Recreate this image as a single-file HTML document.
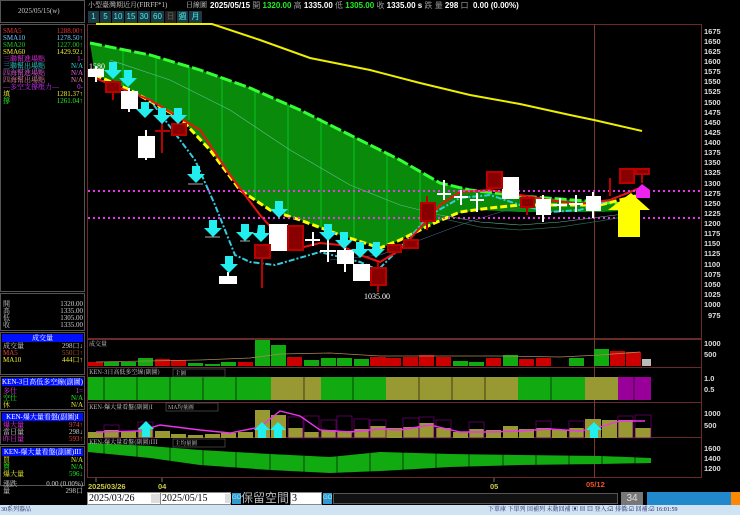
<!DOCTYPE html>
<html><head><meta charset="utf-8"><style>
*{margin:0;padding:0;box-sizing:border-box}
body{width:740px;height:515px;background:#000;overflow:hidden;position:relative;font-family:"Liberation Sans","Noto Sans CJK TC",sans-serif}
.a{position:absolute;white-space:nowrap}
.s{font-family:"Liberation Serif","Noto Serif CJK SC",serif;font-size:7px;line-height:7px}
.lp{position:absolute;left:0;width:85px;border:1px solid #555}
.row{position:absolute;left:3px;width:80px;height:7px;white-space:nowrap;font-family:"Liberation Serif","Noto Serif CJK SC",serif;font-size:7px;line-height:7px}
.row span{position:absolute;right:0;top:0}
.bh{position:absolute;left:2px;width:81px;background:#0010ff;color:#fff;font-size:7px;line-height:8px;height:8px;overflow:hidden;white-space:nowrap;text-align:center;font-family:"Liberation Serif","Noto Serif CJK SC",serif}
.tb{position:absolute;top:11px;height:12px;background:#1c3a44;color:#4ee;font-size:8px;line-height:12px;text-align:center;border-right:1px solid #000}
</style></head><body>
<!-- left panel -->
<div class="lp" style="top:0;height:23px"></div>
<div class="a s" style="left:18px;top:8px;color:#ccc">2025/05/15(w)</div>
<div class="lp" style="top:24px;height:268px"></div>
<div class="row" style="top:28px;color:#e33">SMA5<span>1288.00↑</span></div>
<div class="row" style="top:35px;color:#6cf">SMA10<span>1278.50↑</span></div>
<div class="row" style="top:42px;color:#2c2">SMA20<span>1227.00↑</span></div>
<div class="row" style="top:49px;color:#ee3">SMA60<span>1429.92↓</span></div>
<div class="row" style="top:56px;color:#e3e">三聯幫進場點<span>1-</span></div>
<div class="row" style="top:63px;color:#3dd">三聯幫出場點<span>N/A</span></div>
<div class="row" style="top:70px;color:#e6e">四海幫進場點<span>N/A</span></div>
<div class="row" style="top:77px;color:#e8a">四海幫出場點<span>N/A</span></div>
<div class="row" style="top:84px;color:#c3f">—多空支撐壓力—<span>0-</span></div>
<div class="row" style="top:91px;color:#ee3">填<span>1281.37↑</span></div>
<div class="row" style="top:98px;color:#2e2">撐<span>1261.04↑</span></div>
<div class="lp" style="top:293px;height:38px"></div>
<div class="row" style="top:301px;color:#ccc">開<span>1320.00</span></div>
<div class="row" style="top:308px;color:#ccc">高<span>1335.00</span></div>
<div class="row" style="top:315px;color:#ccc">低<span>1305.00</span></div>
<div class="row" style="top:322px;color:#ccc">收<span>1335.00</span></div>
<div class="lp" style="top:332px;height:43px"></div>
<div class="bh" style="top:334px">成交量</div>
<div class="row" style="top:343px;color:#ccc">成交量<span>298口↓</span></div>
<div class="row" style="top:350px;color:#e44">MA5<span style="color:#a52">550口↑</span></div>
<div class="row" style="top:357px;color:#ee3">MA10<span>444口↑</span></div>
<div class="lp" style="top:376px;height:34px"></div>
<div class="bh" style="top:378px">KEN-3日高低多空線(副圖)</div>
<div class="row" style="top:388px;color:#e3e">多仕<span>1=</span></div>
<div class="row" style="top:395px;color:#2e2">空仕<span>N/A</span></div>
<div class="row" style="top:402px;color:#ee3">休<span>N/A</span></div>
<div class="lp" style="top:411px;height:34px"></div>
<div class="bh" style="top:413px">KEN-爆大量看盤(副圖)I</div>
<div class="row" style="top:422px;color:#e3e">爆大量<span style="color:#e44">974↑</span></div>
<div class="row" style="top:429px;color:#ccc">當日量<span>298↓</span></div>
<div class="row" style="top:436px;color:#e3e">昨日量<span style="color:#e44">593↑</span></div>
<div class="lp" style="top:446px;height:40px"></div>
<div class="bh" style="top:448px">KEN-爆大量看盤(副圖)III</div>
<div class="row" style="top:457px;color:#ee3">買<span>N/A</span></div>
<div class="row" style="top:464px;color:#2e2">賣<span>N/A</span></div>
<div class="row" style="top:471px;color:#ee3">爆大量<span style="color:#2e2">596↓</span></div>
<div class="row" style="top:481px;color:#ccc">漲跌<span>0.00 (0.00%)</span></div>
<div class="row" style="top:488px;color:#ccc">量<span>298口</span></div>

<!-- header -->
<div class="a s" style="left:88px;top:2px;color:#ccc">小型臺灣期近月(FIRFF*1)</div>
<div class="a s" style="left:186px;top:2px;color:#ccc">日線圖</div>
<div class="a" style="left:210px;top:1px;font-size:8px;font-weight:bold;color:#fff;line-height:9px">2025/05/15 <span style="color:#999;font-weight:normal">開</span> <span style="color:#2e2">1320.00</span> <span style="color:#999;font-weight:normal">高</span> 1335.00 <span style="color:#999;font-weight:normal">低</span> <span style="color:#2e2">1305.00</span> <span style="color:#999;font-weight:normal">收</span> 1335.00 s <span style="color:#999;font-weight:normal">跌 量</span> 298 <span style="color:#999;font-weight:normal">口</span>&nbsp; 0.00 (0.00%)</div>
<div class="tb" style="left:88px;width:12px">1</div>
<div class="tb" style="left:100px;width:12px">5</div>
<div class="tb" style="left:112px;width:13px">10</div>
<div class="tb" style="left:125px;width:13px">15</div>
<div class="tb" style="left:138px;width:13px">30</div>
<div class="tb" style="left:151px;width:14px">60</div>
<div class="tb" style="left:165px;width:12px;background:#222;color:#666">日</div>
<div class="tb" style="left:177px;width:12px">週</div>
<div class="tb" style="left:189px;width:14px">月</div>

<svg class="a" style="left:0;top:0" width="740" height="515" viewBox="0 0 740 515">
<g stroke="#6a2a2a" fill="none" stroke-width="1">
<rect x="87.5" y="24.5" width="614" height="314"/>
<rect x="87.5" y="339.5" width="614" height="28"/>
<rect x="87.5" y="367.5" width="614" height="35"/>
<rect x="87.5" y="402.5" width="614" height="35"/>
<rect x="87.5" y="437.5" width="614" height="40"/>
</g>
<line x1="594.5" y1="24" x2="594.5" y2="478" stroke="#7a3a2a"/>
<!-- cloud -->
<polygon fill="#0a8a0a" points="90,43 150,55 200,70 250,88 300,110 350,135 400,160 440,183 470,190 520,196 560,199 600,202 640,205 640,210 600,212 560,212 520,212 480,210 460,213 430,225 400,240 380,248 340,235 300,220 270,210 240,190 210,150 180,118 130,90 95,75"/>
<g stroke="#0f4" stroke-width="1" opacity=".5"><line x1="123" y1="48" x2="123" y2="86"/><line x1="156" y1="56" x2="156" y2="104"/><line x1="189" y1="66" x2="189" y2="120"/><line x1="222" y1="77" x2="222" y2="165"/><line x1="255" y1="90" x2="255" y2="200"/><line x1="288" y1="104" x2="288" y2="217"/><line x1="321" y1="118" x2="321" y2="227"/><line x1="354" y1="136" x2="354" y2="238"/><line x1="387" y1="152" x2="387" y2="246"/><line x1="420" y1="170" x2="420" y2="232"/></g>
<polyline fill="none" stroke="#3f3" stroke-width="3" stroke-dasharray="12,3" points="90,43 150,55 200,70 250,88 300,110 350,135 400,160 440,183 470,190 520,196 560,199 600,202 640,205"/>
<polyline fill="none" stroke="#6b9" stroke-width=".6" points="110,60 170,80 230,110 290,150 350,185 400,205 440,215 480,222 520,225 560,222 600,217 640,212"/>
<polyline fill="none" stroke="#468" stroke-width=".6" points="330,260 380,255 420,240 460,225 500,212 540,204"/>
<polyline fill="none" stroke="#264" stroke-width=".8" points="440,218 480,227 520,230 560,227 600,221 640,214"/>
<!-- SMA60 -->
<polyline fill="none" stroke="#ee0" stroke-width="2" points="96,24 212,24 260,40 310,58 370,70 420,83 470,95 520,104 570,115 594,120 642,131"/>
<!-- yellow dashed -->
<polyline fill="none" stroke="#ff0" stroke-width="3" stroke-dasharray="7,3" points="95,75 130,90 180,118 210,150 240,190 270,210 300,220 340,235 380,248 400,240 430,225 460,212 490,208 520,205 560,205 600,205 640,195"/>
<!-- cyan dashdot -->
<polyline fill="none" stroke="#3cd" stroke-width="2" stroke-dasharray="6,2,2,2" points="100,80 150,100 195,160 215,205 235,255 250,262 275,265 320,252 360,262 378,270 400,248 430,215 460,198 490,195 520,205 550,212 580,210 610,200 640,188"/>
<!-- red SMA5 -->
<polyline fill="none" stroke="#e11" stroke-width="2" points="95,78 150,100 200,130 230,175 260,215 285,243 300,248 320,243 340,245 360,255 380,262 400,250 420,228 440,205 460,192 490,190 520,195 550,200 580,204 610,200 640,188"/>
<g stroke="#e3e" stroke-width="2" stroke-dasharray="2,3"><line x1="88" y1="191" x2="702" y2="191"/><line x1="88" y1="218" x2="702" y2="218"/></g>
<!-- candles -->
<g stroke-width="2">
<g stroke="#fff" fill="#fff"><line x1="96" y1="66" x2="96" y2="82"/><rect x="89" y="70" width="14" height="6"/>
<line x1="129" y1="88" x2="129" y2="112"/><rect x="122" y="92" width="15" height="16"/>
<line x1="146" y1="130" x2="146" y2="160"/><rect x="139" y="137" width="15" height="20"/>
<rect x="220" y="277" width="16" height="6"/><line x1="228" y1="272" x2="228" y2="277"/>
<rect x="270" y="225" width="17" height="25"/>
<line x1="328" y1="240" x2="328" y2="262"/><line x1="320" y1="251" x2="336" y2="251"/>
<line x1="345" y1="248" x2="345" y2="272"/><rect x="338" y="251" width="15" height="12"/>
<rect x="354" y="265" width="15" height="15"/>
<line x1="444" y1="180" x2="444" y2="200"/><line x1="437" y1="194" x2="451" y2="194"/>
<line x1="461" y1="190" x2="461" y2="205"/><line x1="454" y1="197" x2="468" y2="197"/>
<line x1="477" y1="193" x2="477" y2="212"/><line x1="470" y1="200" x2="484" y2="200"/>
<rect x="503" y="178" width="15" height="20"/>
<line x1="543" y1="195" x2="543" y2="222"/><rect x="537" y="200" width="13" height="14"/>
<line x1="560" y1="198" x2="560" y2="212"/><line x1="553" y1="205" x2="567" y2="205"/>
<line x1="576" y1="195" x2="576" y2="212"/><line x1="569" y1="204" x2="583" y2="204"/>
<line x1="593" y1="192" x2="593" y2="218"/><rect x="587" y="197" width="13" height="13"/>
<line x1="313" y1="232" x2="313" y2="246"/><line x1="305" y1="240" x2="320" y2="240"/>
</g>
<g stroke="#b00" fill="#800">
<line x1="113" y1="80" x2="113" y2="100"/><rect x="106" y="82" width="14" height="10"/>
<line x1="162" y1="116" x2="162" y2="153"/><line x1="155" y1="131" x2="170" y2="131"/>
<rect x="172" y="124" width="14" height="11"/>
<line x1="262" y1="245" x2="262" y2="288"/><rect x="255" y="245" width="15" height="13"/>
<rect x="288" y="226" width="15" height="24"/>
<line x1="378" y1="262" x2="378" y2="292"/><rect x="371" y="268" width="15" height="17"/>
<rect x="388" y="245" width="13" height="7"/><rect x="404" y="240" width="14" height="8"/>
<line x1="427" y1="196" x2="427" y2="230"/><rect x="421" y="203" width="14" height="18"/>
<rect x="487" y="172" width="15" height="16"/>
<line x1="527" y1="196" x2="527" y2="215"/><rect x="521" y="198" width="13" height="9"/>
<line x1="610" y1="178" x2="610" y2="196"/>
<rect x="620" y="169" width="14" height="14"/>
<line x1="642" y1="170" x2="642" y2="183"/><rect x="636" y="169" width="13" height="5"/>
</g></g>
<g stroke="#aaa"><line x1="205" y1="237" x2="220" y2="237"/><line x1="240" y1="241" x2="250" y2="241"/><line x1="188" y1="184" x2="203" y2="184"/></g>
<!-- cyan arrows -->
<g fill="#2ee">
<path d="M109 62h8v8h5l-9 9-9-9h5z"/><path d="M124 70h8v8h5l-9 9-9-9h5z"/>
<path d="M141 102h8v7h5l-9 9-9-9h5z"/><path d="M158 108h8v7h5l-9 9-9-9h5z"/><path d="M174 108h8v7h5l-9 9-9-9h5z"/>
<path d="M192 166h8v8h5l-9 9-9-9h5z"/><path d="M209 220h8v8h5l-9 9-9-9h5z"/><path d="M225 256h8v8h5l-9 9-9-9h5z"/>
<path d="M241 224h8v8h5l-9 9-9-9h5z"/><path d="M258 225h7v8h5l-9 9-9-9h5z"/>
<path d="M275 201h8v8h5l-9 9-9-9h5z"/><path d="M324 224h8v8h5l-9 9-9-9h5z"/><path d="M340 232h8v8h5l-9 9-9-9h5z"/>
<path d="M356 242h8v7h5l-9 9-9-9h5z"/><path d="M373 242h7v7h5l-9 9-9-9h5z"/>
</g>
<path fill="#ff0" d="M631 193l19 17h-10v27h-22v-27h-10z"/>
<path fill="#e2e" d="M642 184l8 6v8h-14v-8z"/>
<text x="89" y="69" fill="#fff" font-size="8" font-family="Liberation Serif">1580</text>
<text x="364" y="299" fill="#fff" font-size="8" font-family="Liberation Serif">1035.00</text>
<!-- axis -->
<g fill="#ddd" font-size="7.5" font-family="Liberation Sans" font-weight="bold">
<text x="704" y="34">1675</text><text x="704" y="44">1650</text><text x="704" y="54">1625</text><text x="704" y="64">1600</text><text x="704" y="74">1575</text><text x="704" y="84">1550</text><text x="704" y="94">1525</text><text x="704" y="105">1500</text><text x="704" y="115">1475</text><text x="704" y="125">1450</text><text x="704" y="135">1425</text><text x="704" y="145">1400</text><text x="704" y="155">1375</text><text x="704" y="165">1350</text><text x="704" y="175">1325</text><text x="704" y="186">1300</text><text x="704" y="196">1275</text><text x="704" y="206">1250</text><text x="704" y="216">1225</text><text x="704" y="226">1200</text><text x="704" y="236">1175</text><text x="704" y="246">1150</text><text x="704" y="256">1125</text><text x="704" y="267">1100</text><text x="704" y="277">1075</text><text x="704" y="287">1050</text><text x="704" y="297">1025</text><text x="704" y="307">1000</text><text x="708" y="318">975</text>
<text x="704" y="346">1000</text><text x="704" y="357">500</text>
<text x="704" y="381">1.0</text><text x="704" y="392">0.5</text>
<text x="704" y="416">1000</text><text x="704" y="428">500</text>
<text x="704" y="451">1600</text><text x="704" y="461">1400</text><text x="704" y="471">1200</text>
</g>
<!-- volume -->
<g fill="#c00"><rect x="88" y="362" width="15" height="4"/><rect x="155" y="359" width="15" height="7"/><rect x="171" y="360" width="15" height="6"/><rect x="238" y="362" width="15" height="4"/><rect x="287" y="357" width="15" height="9"/><rect x="370" y="357" width="16" height="9"/><rect x="386" y="358" width="15" height="8"/><rect x="403" y="357" width="15" height="9"/><rect x="419" y="355" width="15" height="11"/><rect x="436" y="357" width="15" height="9"/><rect x="486" y="358" width="15" height="8"/><rect x="519" y="359" width="15" height="7"/><rect x="536" y="358" width="15" height="8"/><rect x="610" y="351" width="15" height="15"/><rect x="626" y="352" width="15" height="14"/></g>
<g fill="#1a1"><rect x="104" y="362" width="15" height="4"/><rect x="121" y="362" width="15" height="4"/><rect x="138" y="358" width="15" height="8"/><rect x="188" y="363" width="15" height="3"/><rect x="205" y="364" width="15" height="2"/><rect x="221" y="362" width="15" height="4"/><rect x="255" y="340" width="15" height="26"/><rect x="271" y="345" width="15" height="21"/><rect x="304" y="360" width="15" height="6"/><rect x="321" y="358" width="15" height="8"/><rect x="337" y="358" width="15" height="8"/><rect x="354" y="359" width="15" height="7"/><rect x="453" y="361" width="15" height="5"/><rect x="469" y="362" width="15" height="4"/><rect x="503" y="355" width="15" height="11"/><rect x="569" y="358" width="15" height="8"/><rect x="594" y="349" width="15" height="17"/></g>
<rect x="642" y="359" width="9" height="7" fill="#bbb"/>
<polyline fill="none" stroke="#a85" stroke-width=".8" points="96,362 200,360 250,358 280,354 330,353 380,356 440,356 500,356 560,357 600,355 640,352"/>
<text x="89" y="346" fill="#ccc" font-size="6" font-family="Noto Serif CJK SC">成交量</text>
<!-- panel 2 -->
<g><rect x="88" y="377" width="183" height="23" fill="#1a1"/><rect x="271" y="377" width="50" height="23" fill="#993"/><rect x="321" y="377" width="65" height="23" fill="#1a1"/><rect x="386" y="377" width="132" height="23" fill="#993"/><rect x="518" y="377" width="67" height="23" fill="#1a1"/><rect x="585" y="377" width="33" height="23" fill="#993"/><rect x="618" y="377" width="33" height="23" fill="#909"/></g>
<g stroke="#000" stroke-width=".6"><line x1="104" y1="377" x2="104" y2="400"/><line x1="137" y1="377" x2="137" y2="400"/><line x1="170" y1="377" x2="170" y2="400"/><line x1="203" y1="377" x2="203" y2="400"/><line x1="236" y1="377" x2="236" y2="400"/><line x1="304" y1="377" x2="304" y2="400"/><line x1="353" y1="377" x2="353" y2="400"/><line x1="419" y1="377" x2="419" y2="400"/><line x1="452" y1="377" x2="452" y2="400"/><line x1="485" y1="377" x2="485" y2="400"/><line x1="551" y1="377" x2="551" y2="400"/><line x1="634" y1="377" x2="634" y2="400"/></g>
<text x="89" y="374" fill="#ccc" font-size="6" font-family="Noto Serif CJK SC">KEN-3日高低多空線(副圖)</text>
<rect x="173" y="369" width="52" height="8" fill="#000" stroke="#666" stroke-width=".6"/><text x="175" y="375" fill="#ccc" font-size="5.5" font-family="Noto Serif CJK SC">主圖</text>
<!-- panel 3 -->
<g fill="#993"><rect x="88" y="432" width="15" height="6"/><rect x="104" y="430" width="15" height="8"/><rect x="121" y="431" width="15" height="7"/><rect x="138" y="428" width="15" height="10"/><rect x="155" y="431" width="15" height="7"/><rect x="171" y="434" width="15" height="4"/><rect x="188" y="435" width="15" height="3"/><rect x="205" y="434" width="15" height="4"/><rect x="221" y="433" width="15" height="5"/><rect x="238" y="432" width="15" height="6"/><rect x="255" y="410" width="15" height="28"/><rect x="271" y="415" width="15" height="23"/><rect x="288" y="428" width="15" height="10"/><rect x="304" y="432" width="15" height="6"/><rect x="321" y="430" width="15" height="8"/><rect x="337" y="431" width="15" height="7"/><rect x="354" y="429" width="15" height="9"/><rect x="370" y="426" width="16" height="12"/><rect x="386" y="428" width="16" height="10"/><rect x="403" y="427" width="16" height="11"/><rect x="419" y="423" width="15" height="15"/><rect x="436" y="428" width="15" height="10"/><rect x="453" y="432" width="15" height="6"/><rect x="469" y="429" width="15" height="9"/><rect x="486" y="430" width="15" height="8"/><rect x="503" y="426" width="15" height="12"/><rect x="519" y="429" width="15" height="9"/><rect x="536" y="428" width="15" height="10"/><rect x="552" y="430" width="15" height="8"/><rect x="569" y="428" width="15" height="10"/><rect x="585" y="419" width="16" height="19"/><rect x="602" y="420" width="15" height="18"/><rect x="618" y="420" width="15" height="18"/><rect x="635" y="428" width="16" height="10"/></g>
<g fill="none" stroke="#606" stroke-width=".8"><rect x="104" y="425" width="15" height="13"/><rect x="138" y="422" width="15" height="16"/><rect x="288" y="417" width="15" height="21"/><rect x="304" y="416" width="15" height="22"/><rect x="321" y="420" width="15" height="18"/><rect x="337" y="416" width="15" height="22"/><rect x="354" y="419" width="15" height="19"/><rect x="370" y="420" width="16" height="18"/><rect x="403" y="418" width="16" height="20"/><rect x="419" y="417" width="15" height="21"/><rect x="436" y="420" width="15" height="18"/><rect x="469" y="422" width="15" height="16"/><rect x="536" y="421" width="15" height="17"/><rect x="569" y="421" width="15" height="17"/><rect x="618" y="416" width="15" height="22"/><rect x="635" y="415" width="16" height="23"/></g>
<polyline fill="none" stroke="#e3e" stroke-width="1.4" points="96,432 140,431 160,425 200,430 230,433 260,427 280,411 300,416 320,430 350,432 380,429 400,430 430,425 460,432 490,432 520,431 550,429 580,431 600,427 620,421 645,421"/>
<g fill="#2ee"><path d="M146 421l8 8h-4v8h-8v-8h-4z"/><path d="M262 422l8 8h-4v8h-8v-8h-4z"/><path d="M278 422l8 8h-4v8h-8v-8h-4z"/><path d="M594 422l8 8h-4v8h-8v-8h-4z"/></g>
<text x="89" y="409" fill="#ccc" font-size="6" font-family="Noto Serif CJK SC">KEN-爆大量看盤(副圖)I</text>
<rect x="166" y="403" width="52" height="8" fill="#000" stroke="#666" stroke-width=".6"/><text x="168" y="409" fill="#ccc" font-size="5.5" font-family="Noto Serif CJK SC">MA均量圖</text>
<!-- panel 4 -->
<polygon fill="#1a1" points="88,443 150,446 200,450 270,454 330,457 380,452 450,454 520,455 600,456 651,458 651,463 600,464 520,465 450,467 380,471 330,473 270,470 200,465 150,458 88,452"/>
<g stroke="#000" stroke-width=".6"><line x1="104" y1="440" x2="104" y2="475"/><line x1="137" y1="440" x2="137" y2="475"/><line x1="170" y1="440" x2="170" y2="475"/><line x1="203" y1="440" x2="203" y2="475"/><line x1="236" y1="440" x2="236" y2="475"/><line x1="270" y1="440" x2="270" y2="475"/><line x1="304" y1="440" x2="304" y2="475"/><line x1="337" y1="440" x2="337" y2="475"/><line x1="370" y1="440" x2="370" y2="475"/><line x1="403" y1="440" x2="403" y2="475"/><line x1="436" y1="440" x2="436" y2="475"/><line x1="469" y1="440" x2="469" y2="475"/><line x1="503" y1="440" x2="503" y2="475"/><line x1="536" y1="440" x2="536" y2="475"/><line x1="569" y1="440" x2="569" y2="475"/><line x1="602" y1="440" x2="602" y2="475"/><line x1="635" y1="440" x2="635" y2="475"/></g>
<text x="89" y="444" fill="#ccc" font-size="6" font-family="Noto Serif CJK SC">KEN-爆大量看盤(副圖)III</text>
<rect x="173" y="439" width="52" height="8" fill="#000" stroke="#666" stroke-width=".6"/><text x="175" y="445" fill="#ccc" font-size="5.5" font-family="Noto Serif CJK SC">主均量圖</text>
<!-- date axis -->
<g stroke="#996" stroke-width=".8"><line x1="96" y1="478" x2="96" y2="482"/><line x1="162" y1="478" x2="162" y2="482"/><line x1="494" y1="478" x2="494" y2="482"/></g>
<g font-size="7.5" font-family="Liberation Sans" font-weight="bold"><text x="88" y="489" fill="#cc4">2025/03/26</text><text x="158" y="489" fill="#cc4">04</text><text x="490" y="489" fill="#cc4">05</text><text x="586" y="487" fill="#e52">05/12</text></g>
</svg>

<!-- bottom controls -->
<div class="a" style="left:87px;top:492px;width:75px;height:13px;background:#fff;border:1px solid #888;font-family:'Liberation Serif';font-size:10px;line-height:12px;color:#000;padding-left:1px">2025/03/26</div>
<div class="a" style="left:151px;top:494px;width:9px;height:9px;background:#ddd"></div>
<div class="a" style="left:163px;top:493px;width:9px;height:12px;background:#ddd;font-size:9px;line-height:12px;color:#000">~</div>
<div class="a" style="left:160px;top:492px;width:71px;height:13px;background:#fff;border:1px solid #888;font-family:'Liberation Serif';font-size:10px;line-height:12px;color:#000;padding-left:1px">2025/05/15</div>
<div class="a" style="left:225px;top:494px;width:6px;height:9px;background:#ddd"></div>
<div class="a" style="left:232px;top:493px;width:9px;height:11px;background:#39c;color:#9ef;font-size:6px;line-height:11px">GO</div>
<div class="a" style="left:241px;top:491px;color:#bbb;font-size:12px;line-height:14px;font-family:'Noto Sans CJK TC',sans-serif">保留空間</div>
<div class="a" style="left:290px;top:492px;width:32px;height:13px;background:#fff;border:1px solid #888;font-family:'Liberation Serif';font-size:10px;line-height:12px;color:#000;padding-left:1px">3</div>
<div class="a" style="left:323px;top:493px;width:9px;height:11px;background:#39c;color:#9ef;font-size:6px;line-height:11px">GO</div>
<div class="a" style="left:333px;top:493px;width:285px;height:11px;background:#111;border:1px solid #555"></div>
<div class="a" style="left:621px;top:492px;width:22px;height:13px;background:#777;color:#ddd;font-size:10px;line-height:13px;text-align:center">34</div>
<div class="a" style="left:647px;top:492px;width:93px;height:13px;background:#28c"></div>
<div class="a" style="left:731px;top:492px;width:9px;height:13px;background:#f80"></div>
<!-- status bar -->
<div class="a" style="left:0;top:505px;width:740px;height:10px;background:#cfe3f3"></div>
<div class="a s" style="left:1px;top:507px;color:#226;font-size:6px">30系列器品</div>
<div class="a s" style="left:488px;top:507px;color:#226;font-size:6px">下單庫 下單列 回補列 未動回補 ▣ ▤ ▥ 登入:☑ 排僑:☑ 回補:☑ 16:01:59</div>
</body></html>
